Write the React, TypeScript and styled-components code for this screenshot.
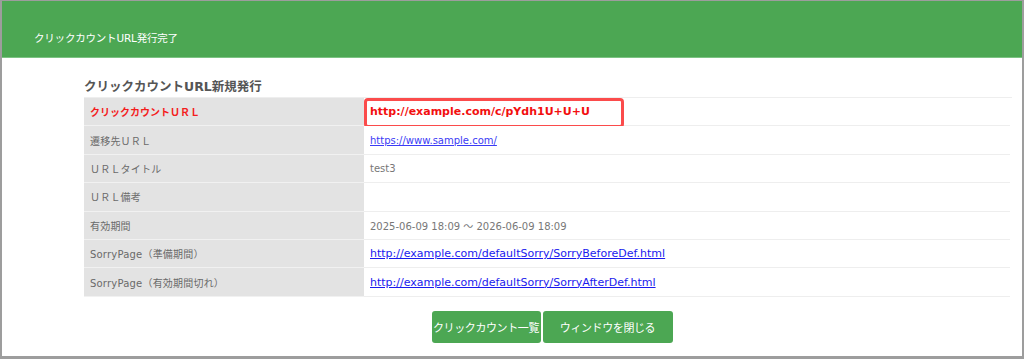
import { Fragment } from 'react';
import styled, { createGlobalStyle } from 'styled-components';

const GlobalStyle = createGlobalStyle`
  html, body {
    margin: 0;
    padding: 0;
    background: #ffffff;
  }
  body {
    font-family: 'DejaVu Sans', 'Noto Sans CJK JP', sans-serif;
  }
`;

const Frame = styled.div`
  box-sizing: border-box;
  width: 1024px;
  height: 359px;
  border: 2px solid #9d9d9d;
  border-top-width: 1px;
  border-bottom-width: 3px;
  background: #ffffff;
  display: flex;
  flex-direction: column;
  overflow: hidden;
`;

const Header = styled.header`
  height: 57px;
  background: #4ca753;
  border-bottom: 1px solid #7cc383;
  display: flex;
  align-items: flex-end;
  padding: 0 0 12px 32px;
  box-sizing: border-box;
`;

const HeaderTitle = styled.h1`
  margin: 0;
  font-size: 10.5px;
  font-weight: normal;
  color: #ffffff;
  letter-spacing: -0.2px;
`;

const Body = styled.main`
  padding: 21px 10px 0 82px;
  display: flex;
  flex-direction: column;
`;

const SectionTitle = styled.h2`
  margin: 0 0 2px 0;
  font-size: 12.5px;
  font-weight: bold;
  color: #555555;
  line-height: 16px;
`;

const Table = styled.div`
  display: grid;
  grid-template-columns: 280px 646px;
  border-top: 1px solid #eeeeee;
`;

const LabelCell = styled.div<{ $accent?: boolean }>`
  height: 28.4px;
  box-sizing: border-box;
  background: #e3e3e3;
  border-bottom: 1px solid #f1f1f1;
  display: flex;
  align-items: center;
  padding-left: 6px;
  font-size: 10px;
  color: ${(p) => (p.$accent ? '#f41d1d' : '#6a6a6a')};
  font-weight: ${(p) => (p.$accent ? 'bold' : 'normal')};
  letter-spacing: ${(p) => (p.$accent ? '0' : '0.2px')};
`;

const ValueCell = styled.div`
  position: relative;
  height: 28.4px;
  box-sizing: border-box;
  background: #ffffff;
  border-bottom: 1px solid #eeeeee;
  display: flex;
  align-items: center;
  padding-left: 6px;
  font-size: 10px;
  color: #777777;
`;

const Highlight = styled.span`
  position: absolute;
  left: 0;
  top: 0;
  width: 260px;
  height: 30px;
  box-sizing: border-box;
  border: 3px solid #fb4b4b;
  border-radius: 4px;
`;

const IssuedUrl = styled.span`
  font-size: 11px;
  font-weight: bold;
  color: #f20f0f;
`;

const Link = styled.a<{ $size?: number; $tone?: string }>`
  font-size: ${(p) => p.$size ?? 10}px;
  color: ${(p) => p.$tone ?? '#1a1aee'};
  text-decoration: underline;
`;

const Actions = styled.div`
  display: flex;
  justify-content: center;
  gap: 2px;
  margin-top: 14px;
  padding-left: 8px;
`;

const Button = styled.button<{ $width: number }>`
  width: ${(p) => p.$width}px;
  height: 32px;
  border: none;
  border-radius: 3px;
  background: #4ca753;
  color: #ffffff;
  font-family: 'Noto Sans CJK JP', sans-serif;
  font-size: 11px;
  padding: 0;
  white-space: nowrap;
  letter-spacing: -0.4px;
`;

interface Row {
  label: string;
  value: React.ReactNode;
  accent?: boolean;
}

const rows: Row[] = [
  {
    label: 'クリックカウントＵＲＬ',
    accent: true,
    value: (
      <>
        <IssuedUrl>http://example.com/c/pYdh1U+U+U</IssuedUrl>
        <Highlight />
      </>
    ),
  },
  {
    label: '遷移先ＵＲＬ',
    value: (
      <Link href="#" $size={10} $tone="#3b3bf5">
        https://www.sample.com/
      </Link>
    ),
  },
  { label: 'ＵＲＬタイトル', value: 'test3' },
  { label: 'ＵＲＬ備考', value: '' },
  { label: '有効期間', value: '2025-06-09 18:09 ～ 2026-06-09 18:09' },
  {
    label: 'SorryPage（準備期間）',
    value: (
      <Link href="#" $size={11}>
        http://example.com/defaultSorry/SorryBeforeDef.html
      </Link>
    ),
  },
  {
    label: 'SorryPage（有効期間切れ）',
    value: (
      <Link href="#" $size={11}>
        http://example.com/defaultSorry/SorryAfterDef.html
      </Link>
    ),
  },
];

export default function App() {
  return (
    <>
      <GlobalStyle />
      <Frame>
        <Header>
          <HeaderTitle>クリックカウントURL発行完了</HeaderTitle>
        </Header>
        <Body>
          <SectionTitle>クリックカウントURL新規発行</SectionTitle>
          <Table>
            {rows.map((row) => (
              <Fragment key={row.label}>
                <LabelCell $accent={row.accent}>{row.label}</LabelCell>
                <ValueCell>{row.value}</ValueCell>
              </Fragment>
            ))}
          </Table>
          <Actions>
            <Button $width={109}>クリックカウント一覧</Button>
            <Button $width={130}>ウィンドウを閉じる</Button>
          </Actions>
        </Body>
      </Frame>
    </>
  );
}
